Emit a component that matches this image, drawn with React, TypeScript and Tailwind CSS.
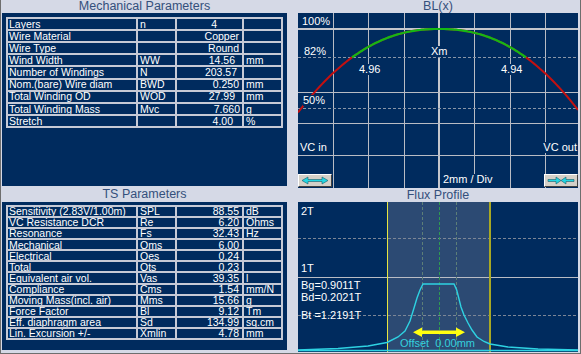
import React from 'react';

type Row = { name: string; sym: string; val: string; unit: string; pr: string };

const mechRows: Row[] = [
  { name: 'Layers', sym: 'n', val: '4', unit: '', pr: 'pr-[25px]' },
  { name: 'Wire Material', sym: '', val: 'Copper', unit: '', pr: 'pr-[3px]' },
  { name: 'Wire Type', sym: '', val: 'Round', unit: '', pr: 'pr-[3px]' },
  { name: 'Wind Width', sym: 'WW', val: '14.56', unit: 'mm', pr: 'pr-[7px]' },
  { name: 'Number of Windings', sym: 'N', val: '203.57', unit: '', pr: 'pr-[5px]' },
  { name: 'Nom.(bare) Wire diam', sym: 'BWD', val: '0.250', unit: 'mm', pr: 'pr-[3px]' },
  { name: 'Total Winding OD', sym: 'WOD', val: '27.99', unit: 'mm', pr: 'pr-[7px]' },
  { name: 'Total Winding Mass', sym: 'Mvc', val: '7.660', unit: 'g', pr: 'pr-[2px]' },
  { name: 'Stretch', sym: '', val: '4.00', unit: '%', pr: 'pr-[9px]' },
];

const tsRows: Row[] = [
  { name: 'Sensitivity (2.83V/1.00m)', sym: 'SPL', val: '88.55', unit: 'dB', pr: 'pr-[3px]' },
  { name: 'VC Resistance DCR', sym: 'Re', val: '6.20', unit: 'Ohms', pr: 'pr-[3px]' },
  { name: 'Resonance', sym: 'Fs', val: '32.43', unit: 'Hz', pr: 'pr-[3px]' },
  { name: 'Mechanical', sym: 'Qms', val: '6.00', unit: '', pr: 'pr-[3px]' },
  { name: 'Electrical', sym: 'Qes', val: '0.24', unit: '', pr: 'pr-[3px]' },
  { name: 'Total', sym: 'Qts', val: '0.23', unit: '', pr: 'pr-[3px]' },
  { name: 'Equivalent air vol.', sym: 'Vas', val: '39.35', unit: 'l', pr: 'pr-[3px]' },
  { name: 'Compliance', sym: 'Cms', val: '1.54', unit: 'mm/N', pr: 'pr-[3px]' },
  { name: 'Moving Mass(incl. air)', sym: 'Mms', val: '15.66', unit: 'g', pr: 'pr-[3px]' },
  { name: 'Force Factor', sym: 'Bl', val: '9.12', unit: 'Tm', pr: 'pr-[3px]' },
  { name: 'Eff. diaphragm area', sym: 'Sd', val: '134.99', unit: 'sq.cm', pr: 'pr-[3px]' },
  { name: 'Lin. Excursion +/-', sym: 'Xmlin', val: '4.78', unit: 'mm', pr: 'pr-[3px]' },
];

function ParamTable({ rows, sizeClass }: { rows: Row[]; sizeClass: string }) {
  const cell = 'border border-[#c6cad6] flex items-center overflow-hidden whitespace-nowrap';
  return (
    <div className={`grid border border-[#c6cad6] ${sizeClass}`}>
      {rows.map((r) => (
        <div key={r.name} className="grid grid-cols-[130px_39px_67px_39px] min-h-0">
          <div className={`${cell} pl-[1px]`}>{r.name}</div>
          <div className={`${cell} pl-[2px]`}>{r.sym}</div>
          <div className={`${cell} justify-end ${r.pr}`}>{r.val}</div>
          <div className={`${cell} pl-[2px]`}>{r.unit}</div>
        </div>
      ))}
    </div>
  );
}

function Header({ title, h }: { title: string; h: string }) {
  return (
    <div className={`${h} flex items-center justify-center text-[12.5px] leading-none text-[#34507c]`}>
      {title}
    </div>
  );
}

// BL(x) curve, percent mapped to chart y (0% at bottom, 100% at y=16)
function blCurve() {
  const all: string[] = [];
  const green: string[] = [];
  for (let x = 0; x <= 280; x += 2) {
    const d = Math.abs(x - 141);
    const v = 100 - 18 * Math.pow(d / 87, 2.23);
    const y = 174 - 1.58 * v;
    all.push(`${x},${y.toFixed(1)}`);
    if (v >= 82) green.push(`${x},${y.toFixed(1)}`);
  }
  return { all: 'M' + all.join(' L'), green: 'M' + green.join(' L') };
}

function ArrowButton({ inward }: { inward?: boolean }) {
  return (
    <div className="w-[34px] h-[13px] bg-[#d4d0c8] border border-t-white border-l-white border-b-[#404040] border-r-[#404040] flex items-center justify-center">
      <svg width="28" height="9" viewBox="0 0 28 9">
        {inward ? (
          <g fill="#22d6e2" stroke="#1b5a6a" strokeWidth="0.6">
            <path d="M1 3.5 H9 V1 L14 4.5 L9 8 V5.5 H1 Z" />
            <path d="M27 3.5 H19 V1 L14 4.5 L19 8 V5.5 H27 Z" />
          </g>
        ) : (
          <path
            d="M1 4.5 L7 1 V3.5 H21 V1 L27 4.5 L21 8 V5.5 H7 V8 Z"
            fill="#22d6e2"
            stroke="#1b5a6a"
            strokeWidth="0.6"
          />
        )}
      </svg>
    </div>
  );
}

function BLChart() {
  const c = blCurve();
  const vlines = [35.5, 70.5, 106.5, 176.5, 212.5, 247.5];
  const label = 'absolute leading-none text-[11px] text-white bg-[#002b5e]';
  return (
    <div className="relative h-[175px] bg-[#002b5e] overflow-hidden">
      <svg className="absolute inset-0" width="280" height="175">
        {vlines.map((x) => (
          <line key={x} x1={x} y1="0" x2={x} y2="175" stroke="#b9bcc4" strokeWidth="1" />
        ))}
        <line x1="141" y1="0" x2="141" y2="175" stroke="#c4c6cc" strokeWidth="2" />
        <line x1="0" y1="16" x2="280" y2="16" stroke="#c4c6cc" strokeWidth="2" />
        {[79.5, 110.5, 142.5].map((y) => (
          <line key={y} x1="0" y1={y} x2="280" y2={y} stroke="#b9bcc4" strokeWidth="1" />
        ))}
        <line x1="0" y1="44.5" x2="280" y2="44.5" stroke="#8a96a8" strokeWidth="1" strokeDasharray="3 2" />
        <line x1="0" y1="95.5" x2="280" y2="95.5" stroke="#8a96a8" strokeWidth="1" strokeDasharray="3 2" />
        <path d={c.all} fill="none" stroke="#c41010" strokeWidth="2" />
        <path d={c.green} fill="none" stroke="#14b814" strokeWidth="2.2" />
      </svg>
      <span className={`${label} left-[4px] top-[3px]`}>100%</span>
      <span className={`${label} left-[6px] top-[33px]`}>82%</span>
      <span className={`${label} left-[5px] top-[82px]`}>50%</span>
      <span className={`${label} left-[132px] top-[33px] px-[1px]`}>Xm</span>
      <span className={`${label} left-[61px] top-[51px]`}>4.96</span>
      <span className={`${label} left-[203px] top-[51px]`}>4.94</span>
      <span className={`${label} left-[2px] top-[129px]`}>VC in</span>
      <span className={`${label} right-[1px] top-[129px]`}>VC out</span>
      <span className={`${label} left-[145px] top-[161px] text-[11.5px] pb-[3px]`}>2mm / Div</span>
      <div className="absolute inset-x-0 bottom-[1px] flex justify-between">
        <ArrowButton />
        <ArrowButton inward />
      </div>
    </div>
  );
}

function FluxChart() {
  const pts: [number, number][] = [
    [0, 148], [40, 146.5], [70, 144], [89, 140.5], [100, 135], [107, 129], [112, 119],
    [116, 106], [119, 96], [122, 88], [125, 82], [156, 82], [158.7, 88], [161, 97],
    [163, 105], [166, 113], [170, 121], [174, 128], [179, 135], [186, 139.5], [192, 142],
    [210, 145], [240, 147], [280, 148],
  ];
  const d = 'M' + pts.map((p) => p.join(',')).join(' L');
  const label = 'absolute leading-none text-[11px] text-white';
  return (
    <div className="relative h-[150px] bg-[#002b5e] overflow-hidden">
      <svg className="absolute inset-0" width="280" height="150">
        <rect x="89" y="0" width="103" height="150" fill="#2c4a73" />
        <line x1="0" y1="36.5" x2="280" y2="36.5" stroke="#7c8696" strokeWidth="1" strokeDasharray="3 2" />
        <line x1="0" y1="75.5" x2="280" y2="75.5" stroke="#b9bcc4" strokeWidth="1" />
        <line x1="0" y1="113.5" x2="280" y2="113.5" stroke="#7c8696" strokeWidth="1" strokeDasharray="3 2" />
        <line x1="124.5" y1="0" x2="124.5" y2="150" stroke="#5d7f78" strokeWidth="1" strokeDasharray="3 2" />
        <line x1="141.5" y1="0" x2="141.5" y2="150" stroke="#2f9a52" strokeWidth="1" strokeDasharray="3 2" />
        <line x1="158.5" y1="0" x2="158.5" y2="150" stroke="#5d7f78" strokeWidth="1" strokeDasharray="3 2" />
        <line x1="89.5" y1="0" x2="89.5" y2="150" stroke="#e6e640" strokeWidth="1" />
        <line x1="192" y1="0" x2="192" y2="150" stroke="#a8a824" strokeWidth="2" />
        <path d={d} fill="none" stroke="#2ed2e2" strokeWidth="1.4" />
        <line x1="0" y1="148.5" x2="280" y2="148.5" stroke="#2ed2e2" strokeWidth="1.5" />
        <g fill="#ffff10">
          <rect x="122" y="128.5" width="38" height="3.5" />
          <path d="M115 130.25 L124 125.5 V135 Z" />
          <path d="M167 130.25 L158 125.5 V135 Z" />
        </g>
      </svg>
      <span className={`${label} left-[3px] top-[4px]`}>2T</span>
      <span className={`${label} left-[3px] top-[61px]`}>1T</span>
      <div className={`${label} left-[3px] top-[78px] flex flex-col gap-[1px]`}>
        <span>Bg=0.9011T</span>
        <span>Bd=0.2021T</span>
        <span className="mt-[6px]">Bt =1.2191T</span>
      </div>
      <span className="absolute left-[102px] top-[136px] leading-none text-[11px] text-[#34d0de] whitespace-pre">
        Offset  0.00mm
      </span>
    </div>
  );
}

export default function App() {
  return (
    <div className="w-[581px] h-[354px] bg-[#d5d9e6] border-l border-r border-b border-[#6e6e6e] flex font-['Liberation_Sans',Arial,sans-serif] text-white text-[10.5px] leading-none">
      <div className="ml-[1px] w-[285px] flex flex-col">
        <Header title="Mechanical Parameters" h="h-[13px]" />
        <div className="h-[173px] bg-[#002b5e] pt-[4px] px-[4px]">
          <ParamTable rows={mechRows} sizeClass="h-[111px] grid-rows-[repeat(9,minmax(0,1fr))]" />
        </div>
        <Header title="TS Parameters" h="h-[16px]" />
        <div className="h-[148px] bg-[#002b5e] pt-[3px] px-[4px]">
          <ParamTable rows={tsRows} sizeClass="h-[135px] grid-rows-[repeat(12,minmax(0,1fr))]" />
        </div>
      </div>
      <div className="ml-[11px] w-[280px] flex flex-col">
        <Header title="BL(x)" h="h-[13px]" />
        <BLChart />
        <Header title="Flux Profile" h="h-[14px]" />
        <FluxChart />
      </div>
    </div>
  );
}
